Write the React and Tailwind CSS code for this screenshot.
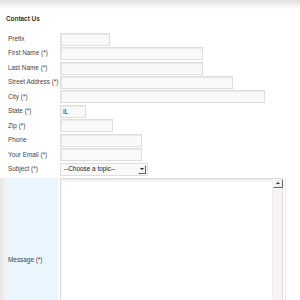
import React from "react";

const fields = [
  { label: "Prefix", w: "w-[50px]" },
  { label: "First Name (*)", w: "w-[143px]" },
  { label: "Last Name (*)", w: "w-[143px]" },
  { label: "Street Address (*)", w: "w-[173px]" },
  { label: "City (*)", w: "w-[205px]" },
  { label: "State (*)", w: "w-[26px]", value: "IL" },
  { label: "Zip (*)", w: "w-[53px]" },
  { label: "Phone", w: "w-[82px]" },
  { label: "Your Email (*)", w: "w-[82px]" },
];

const Field = ({ w, value }) => (
  <div
    className={`${w} h-[13px] border border-[#dedede] bg-[#f9f9f9] shadow-[inset_1px_1px_1px_#e8e8e8] flex items-center pl-[2px] text-[6.4px] text-[#222]`}
  >
    {value}
  </div>
);

export default function App() {
  return (
    <div className="w-[300px] h-[300px] overflow-hidden bg-white font-['Liberation_Sans',Arial,sans-serif]">
      {/* top shade */}
      <div className="h-[9px] bg-gradient-to-b from-[#e0e0e0] to-white" />
      <h1 className="pl-[6px] pt-[6px] text-[6.4px] leading-[7px] font-bold text-[#333]">
        Contact Us
      </h1>

      {/* form rows */}
      <div className="mt-[10px]">
        {fields.map((f) => (
          <div key={f.label} className="flex items-center h-[14.44px]">
            <div className="w-[60px] pl-[8px] text-[6.4px] text-[#444] leading-none">
              {f.label}
            </div>
            <Field w={f.w} value={f.value} />
          </div>
        ))}

        {/* Subject */}
        <div className="flex items-center h-[14.44px]">
          <div className="w-[60px] pl-[8px] text-[6.4px] text-[#444] leading-none">
            Subject (*)
          </div>
          <div className="w-[88px] h-[13px] border border-[#dedede] bg-[#f9f9f9] flex items-center justify-between pl-[3px] pr-[1px] text-[6.4px] text-[#222]">
            <span>--Choose a topic--</span>
            <div className="w-[8px] h-[9px] bg-[#f2f2f2] border-r border-b border-[#666] border-t border-l border-t-white border-l-white flex items-center justify-center">
              <div className="w-0 h-0 border-l-[2px] border-r-[2px] border-t-[2px] border-l-transparent border-r-transparent border-t-[#222]" />
            </div>
          </div>
        </div>
      </div>

      {/* Message */}
      <div className="mt-[1.5px] flex h-[164px]">
        <div className="w-[7px] bg-gradient-to-r from-[#e6e6e6] to-[#f6f6f6]" />
        <div className="w-[51px] bg-[#e9f6fe] flex items-center pl-[1px] text-[6.4px] text-[#444] leading-none">
          Message (*)
        </div>
        <div className="w-[2px]" />
        <div className="relative w-[223px] border border-[#dcdcdc] bg-white shadow-[inset_0_2px_2px_#ececec]">
          <div className="absolute right-0 top-0 bottom-0 w-[10px] bg-[#f7f3f3] border-l border-[#eeeeee]">
            <div className="w-[10px] h-[9px] bg-[#f0f0f0] border-r border-b border-[#666] border-t border-l border-t-white border-l-white flex items-center justify-center">
              <div className="w-0 h-0 border-l-[2px] border-r-[2px] border-b-[2px] border-l-transparent border-r-transparent border-b-[#333]" />
            </div>
          </div>
        </div>
        <div className="w-[2px]" />
        <div className="w-[1px] bg-[#e3eef8]" />
      </div>
    </div>
  );
}
